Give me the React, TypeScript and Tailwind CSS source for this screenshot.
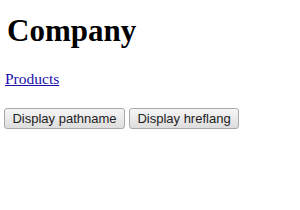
export default function App() {
  return (
    <div className="w-[300px] h-[210px] bg-white pl-[5px] font-['Liberation_Serif',serif] text-black">
      <h1 className="pt-[14px] text-[31px] leading-[34px] font-bold pl-[2px]">Company</h1>
      <div className="mt-[22px] leading-[18px] text-[15.5px]">
        <a href="#" className="text-[#1a0dab] underline">
          Products
        </a>
      </div>
      <div className="mt-[20px] flex gap-[4px] -ml-[1px] font-['Liberation_Sans',Arial,sans-serif]">
        <button className="w-[121px] h-[21px] text-[13px] leading-[19px] text-[#222] border border-[#a9a9a9] rounded-[3px] bg-gradient-to-b from-[#f6f6f6] to-[#dddddd]">
          Display pathname
        </button>
        <button className="w-[110px] h-[21px] text-[13px] leading-[19px] text-[#222] border border-[#a9a9a9] rounded-[3px] bg-gradient-to-b from-[#f6f6f6] to-[#dddddd]">
          Display hreflang
        </button>
      </div>
    </div>
  );
}
